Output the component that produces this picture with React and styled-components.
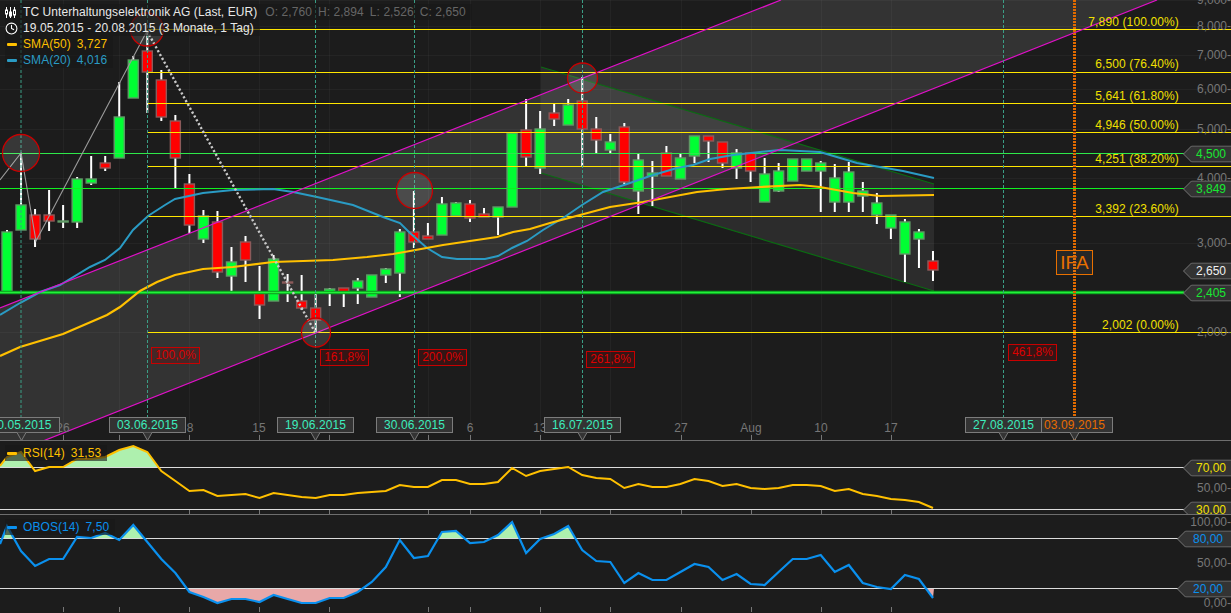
import { Clock } from "lucide-react";
import styled, { createGlobalStyle } from "styled-components";

const GlobalStyle = createGlobalStyle`
  html, body {
    margin: 0;
    padding: 0;
    background: #1c1c1c;
    overflow: hidden;
  }
`;

const Page = styled.div`
  width: 1231px;
  height: 613px;
  display: grid;
  grid-template-rows: 441px 74px 98px;
  background: #1c1c1c;
  font-family: "Liberation Sans", Arial, sans-serif;
  font-size: 12px;
  line-height: 16px;
  overflow: hidden;
`;

const Pane = styled.section`
  position: relative;
  overflow: hidden;
  box-sizing: border-box;
  border-bottom: ${(p) => (p.$last ? "none" : "1px solid #6e6e6e")};
`;

const ChartSvg = styled.svg`
  position: absolute;
  inset: 0;
  display: block;
`;

const Legend = styled.div`
  position: absolute;
  top: ${(p) => p.$top}px;
  left: 5px;
  display: flex;
  flex-direction: column;
  align-items: flex-start;
`;

const LegendRow = styled.div`
  display: flex;
  align-items: center;
  gap: 6px;
  height: 16px;
  padding-right: 6px;
  background: rgba(24, 24, 24, 0.62);
  color: ${(p) => p.$color};
  letter-spacing: 0.07px;
  white-space: nowrap;
`;

const LegendIcon = styled.span`
  width: 18px;
  margin-right: -6px;
  display: flex;
  align-items: center;
  color: #fff;
`;

const Dash = styled.i`
  display: block;
  width: 10px;
  height: 3px;
  margin-left: 2px;
  border-radius: 1px;
  background: ${(p) => p.$color};
`;

const Ohlc = styled.span`
  color: #666;
  margin-left: ${(p) => (p.$first ? "2px" : "0")};
`;

const AxisLabel = styled.span`
  position: absolute;
  right: 0;
  top: ${(p) => p.$y}px;
  transform: translateY(-50%);
  color: #787878;
  white-space: nowrap;
`;

const FibLabel = styled.span`
  position: absolute;
  right: 52px;
  top: ${(p) => p.$y}px;
  transform: translateY(-50%);
  color: #f2e000;
  letter-spacing: 0.13px;
  white-space: nowrap;
`;

const TagBox = styled.div`
  position: absolute;
  right: 0;
  top: ${(p) => p.$y}px;
  width: ${(p) => p.$w}px;
  height: 17px;
  transform: translateY(-50%);
  color: ${(p) => p.$color};

  svg {
    position: absolute;
    inset: 0;
  }

  span {
    position: absolute;
    right: ${(p) => p.$pad}px;
    top: 0;
    line-height: 17px;
  }
`;

const PercentBadge = styled.span`
  position: absolute;
  left: ${(p) => p.$x}px;
  top: ${(p) => p.$y}px;
  box-sizing: border-box;
  width: 49px;
  height: 17px;
  border: 1px solid #c80000;
  background: rgba(140, 0, 0, 0.22);
  color: #dc0000;
  text-align: center;
  line-height: 14px;
`;

const IfaBadge = styled.span`
  position: absolute;
  left: 1056px;
  top: 250px;
  box-sizing: border-box;
  width: 37px;
  height: 25px;
  border: 1px solid #e87000;
  background: rgba(255, 255, 255, 0.05);
  color: #e87000;
  font-size: 19px;
  line-height: 23px;
  text-align: center;
`;

const TickLabel = styled.span`
  position: absolute;
  left: ${(p) => p.$x}px;
  top: 420px;
  transform: translateX(-50%);
  color: #767676;
`;

const DateFlag = styled.div`
  position: absolute;
  left: ${(p) => p.$x - 38.5}px;
  top: 417px;
  box-sizing: border-box;
  width: 77px;
  height: 16px;
  border: 1px solid #7c7c7c;
  background: #333;
  color: ${(p) => p.$color};
  letter-spacing: 0.1px;
  text-align: center;
  line-height: 14px;

  svg {
    position: absolute;
    left: 33px;
    top: 14px;
  }
`;

const STEP = 14.03;
const cx = (i) => 7 + STEP * i;

// [up, bodyTop, bodyBottom, wickTop, wickBottom]
const CANDLES = [
  [1, 232, 292, 230, 292],
  [1, 205, 230, 153, 230],
  [0, 215, 239, 209, 247],
  [0, 215, 221, 190, 231],
  [2, 221, 222, 205, 228],
  [1, 179, 222, 177, 228],
  [1, 179, 183, 156, 185],
  [0, 163, 168, 156, 171],
  [1, 117, 158, 82, 158],
  [1, 60, 98, 56, 98],
  [0, 51, 72, 30, 113],
  [0, 80, 117, 70, 121],
  [0, 121, 158, 115, 188],
  [0, 184, 225, 174, 233],
  [1, 216, 239, 210, 243],
  [0, 222, 272, 211, 278],
  [1, 262, 276, 247, 292],
  [0, 242, 260, 236, 282],
  [0, 293, 305, 266, 319],
  [1, 259, 301, 255, 301],
  [0, 282, 283, 274, 302],
  [0, 301, 308, 275, 310],
  [0, 308, 320, 293, 332],
  [1, 289, 292, 288, 306],
  [0, 288, 292, 288, 307],
  [1, 281, 288, 278, 304],
  [1, 275, 297, 275, 297],
  [1, 269, 275, 268, 283],
  [1, 232, 273, 229, 297],
  [0, 232, 242, 191, 248],
  [0, 236, 239, 223, 239],
  [1, 204, 235, 197, 235],
  [1, 203, 216, 202, 217],
  [0, 204, 218, 200, 222],
  [0, 214, 217, 208, 217],
  [1, 207, 217, 207, 235],
  [1, 133, 207, 133, 207],
  [0, 130, 157, 99, 166],
  [1, 129, 168, 111, 174],
  [0, 113, 119, 103, 126],
  [1, 105, 125, 99, 125],
  [0, 101, 129, 77, 166],
  [0, 129, 140, 117, 153],
  [1, 142, 150, 134, 153],
  [0, 127, 182, 123, 184],
  [1, 160, 191, 154, 214],
  [1, 173, 176, 161, 206],
  [0, 153, 176, 146, 176],
  [1, 158, 179, 154, 179],
  [1, 136, 156, 136, 163],
  [0, 136, 141, 136, 162],
  [0, 142, 163, 142, 168],
  [1, 153, 168, 149, 179],
  [0, 153, 171, 153, 182],
  [1, 174, 202, 158, 202],
  [1, 171, 191, 163, 192],
  [1, 159, 181, 159, 181],
  [1, 159, 171, 159, 171],
  [1, 163, 171, 161, 212],
  [1, 178, 202, 164, 212],
  [1, 172, 202, 162, 212],
  [1, 191, 196, 182, 212],
  [1, 203, 215, 193, 224],
  [1, 215, 228, 215, 239],
  [1, 222, 254, 219, 282],
  [1, 232, 239, 229, 268],
  [0, 261, 270, 251, 281],
];

const SMA20 = "0,315 20,303 40,292 60,285 90,267 105,260 120,248 133,230 148,216 165,205 175,199 203,193 233,190 273,189 293,192 317,197 353,205 383,217 400,223 410,233 427,248 442,257 457,259 485,259 498,256 512,248 527,241 543,230 563,218 582,205 603,192 630,183 650,176 677,168 693,165 710,159 733,155 760,152 780,150 820,152 857,163 903,171 934,178";
const SMA50 = "0,356 20,347 63,334 107,315 120,307 140,291 157,282 175,275 203,269 233,267 273,262 333,260 367,257 393,254 410,251 443,245 497,237 513,232 530,229 550,223 610,207 643,202 697,192 727,189 760,187 800,185 820,187 853,193 880,196 934,195";

// indicator readings as screen y, one per candle, the first one starts at the left edge
const RSI_Y = [458, 453, 472, 468, 468, 460, 460, 458, 451, 447, 453, 472, 482, 492, 491, 497, 496, 495, 499, 494, 496, 498, 499, 496, 496, 494, 493, 492, 486, 488, 488, 481, 481, 485, 485, 483, 469, 477, 472, 470, 468, 476, 479, 480, 489, 485, 488, 488, 485, 480, 482, 487, 485, 489, 490, 489, 486, 486, 487, 492, 490, 495, 497, 500, 501, 503, 509];
const OBOS_Y = [527, 552, 567, 560, 560, 538, 539, 534, 541, 526, 543, 560, 574, 593, 598, 604, 600, 600, 603, 596, 600, 604, 604, 599, 599, 593, 583, 568, 541, 559, 557, 533, 532, 544, 543, 536, 523, 554, 540, 535, 527, 551, 562, 563, 584, 574, 581, 581, 573, 565, 568, 581, 575, 585, 586, 573, 560, 560, 556, 573, 566, 584, 588, 590, 576, 580, 599];

const toPoints = (ys, startY) =>
  [`0,${startY}`, ...ys.map((y, i) => `${cx(i).toFixed(1)},${y}`)].join(" ");

const GRID_X = [63, 119, 189, 259, 329, 428, 470, 540, 610, 681, 751, 821, 891];
const GRID_Y = [0, 26, 55, 89, 129, 178, 243, 332];
const AXIS = [
  ["9,000", 0],
  ["8,000", 26],
  ["7,000", 55],
  ["6,000", 89],
  ["5,000", 129],
  ["4,000", 178],
  ["3,000", 243],
  ["2,000", 332],
];
const FIBS = [
  ["7,890 (100.00%)", 22, 29.5],
  ["6,500 (76.40%)", 64, 72.5],
  ["5,641 (61.80%)", 96, 103.5],
  ["4,946 (50.00%)", 125, 132.5],
  ["4,251 (38.20%)", 159, 166.5],
  ["3,392 (23.60%)", 209, 216.5],
  ["2,002 (0.00%)", 325, 332.5],
];
const CIRCLES = [
  [21, 153, 18.5],
  [147, 29.5, 16.5],
  [316, 332.5, 14.5],
  [414.5, 190.5, 18],
  [582.5, 78, 15],
];
const TICKS = [
  ["26", 63],
  ["8", 190],
  ["15", 259],
  ["6", 470],
  ["13", 540],
  ["27", 681],
  ["Aug", 751],
  ["10", 821],
  ["17", 891],
];
const BADGES = [
  ["100,0%", 151, 347],
  ["161,8%", 320, 349],
  ["200,0%", 418, 349],
  ["261,8%", 586, 351],
  ["461,8%", 1008, 344],
];
const TEAL = "#3dedbd";
const DATES = [
  ["03.09.2015", 1074.5, "#e86c00"],
  ["20.05.2015", 21, TEAL],
  ["03.06.2015", 147.5, TEAL],
  ["19.06.2015", 315.5, TEAL],
  ["30.06.2015", 414.5, TEAL],
  ["16.07.2015", 582.5, TEAL],
  ["27.08.2015", 1003.5, TEAL],
];

const CandleIcon = () => (
  <svg width="12" height="11" viewBox="0 0 12 11">
    <g stroke="#fff" strokeWidth="1" fill="#fff">
      <path d="M1.5 0v11M5.5 0v11M9.5 0v11" />
      <rect x="0.5" y="3" width="2" height="4" fill="#1c1c1c" />
      <rect x="4.5" y="5" width="2" height="4" />
      <rect x="8.5" y="3" width="2" height="5" fill="#1c1c1c" />
    </g>
  </svg>
);

const PriceTag = ({ y, text, color, wide }) => {
  const w = wide ? 54 : 48;
  return (
    <TagBox $y={y} $w={w} $color={color} $pad={wide ? 8 : 5}>
      <svg width={w} height="17">
        <path
          d={`M${w + 2} 0.5H8.5L0.5 8.5L8.5 16.5H${w + 2}Z`}
          fill="#333"
          stroke="#777"
        />
      </svg>
      <span>{text}</span>
    </TagBox>
  );
};

const Candles = () =>
  CANDLES.map(([up, top, bottom, wickTop, wickBottom], i) => {
    const x = cx(i);
    const fill = up === 1 ? "#00ff33" : up === 0 ? "#ff0000" : "#6a8a6a";
    const edge = up === 0 ? "#8c5a5a" : "#5f9a66";
    return (
      <g key={i}>
        <rect x={x - 1} y={wickTop} width="2" height={wickBottom - wickTop} fill="#fff" />
        <rect
          x={x - 5}
          y={top}
          width="10"
          height={bottom - top}
          fill={fill}
          stroke={edge}
          strokeWidth="1.4"
        />
      </g>
    );
  });

const PriceDrawing = () => (
  <ChartSvg width="1231" height="441" viewBox="0 0 1231 441">
    <polygon points="0,308 781,0 1157,0 43,441 0,441" fill="rgba(255,255,255,0.1)" />
    <polygon points="541,67 934,184 934,291 541,173" fill="rgba(255,255,255,0.07)" />
    {GRID_X.map((x) => (
      <line key={x} x1={x + 0.5} x2={x + 0.5} y1="0" y2="441" stroke="rgba(255,255,255,0.035)" />
    ))}
    {GRID_Y.map((y) => (
      <line key={y} x1="0" x2="1231" y1={y + 0.5} y2={y + 0.5} stroke="rgba(255,255,255,0.035)" />
    ))}
    <line x1="541" y1="67" x2="934" y2="184" stroke="#0b6b12" strokeWidth="1.2" />
    <line x1="541" y1="173" x2="934" y2="291" stroke="#0b6b12" strokeWidth="1.2" />
    <Candles />
    {FIBS.map(([label, , y]) => (
      <line key={label} x1="148" x2="1231" y1={y} y2={y} stroke="#ffe600" />
    ))}
    <line x1="0" x2="1184" y1="153.5" y2="153.5" stroke="#2ee84a" />
    <line x1="0" x2="1184" y1="188.5" y2="188.5" stroke="#10f020" />
    <line x1="0" x2="1184" y1="292.5" y2="292.5" stroke="#0a9a1c" strokeWidth="3.4" />
    <line x1="0" x2="1184" y1="292.5" y2="292.5" stroke="#22f03a" strokeWidth="1.4" />
    <polyline points={SMA20} fill="none" stroke="#2a9bc4" strokeWidth="2" />
    <polyline points={SMA50} fill="none" stroke="#ffc000" strokeWidth="2.2" />
    <line x1="0" y1="308" x2="781" y2="0" stroke="#e010c8" strokeWidth="1.2" />
    <line x1="43" y1="441" x2="1157" y2="0" stroke="#e010c8" strokeWidth="1.2" />
    {[21, 147.5, 315.5, 414.5, 582.5, 1003.5].map((x) => (
      <line key={x} x1={x} x2={x} y1="0" y2="441" stroke="#3a9f86" strokeDasharray="3 2" />
    ))}
    <line x1="1074.5" x2="1074.5" y1="0" y2="441" stroke="#e06a00" strokeWidth="3" strokeDasharray="2 1" />
    <polyline points="0,180 21,153 36,241 147,31" fill="none" stroke="#9a9a9a" strokeWidth="1.1" />
    <line x1="147" y1="31" x2="315" y2="332" stroke="#c8c8c8" strokeWidth="2.4" strokeDasharray="2.2 2.2" />
    {CIRCLES.map(([x, y, r]) => (
      <circle key={x} cx={x} cy={y} r={r} fill="rgba(255,255,255,0.12)" stroke="#c80000" strokeWidth="1.3" />
    ))}
    {GRID_X.map((x) => (
      <line key={x} x1={x + 0.5} x2={x + 0.5} y1="435" y2="441" stroke="#777" />
    ))}
  </ChartSvg>
);

const RsiDrawing = () => {
  const line = toPoints(RSI_Y, 467);
  return (
    <ChartSvg width="1231" height="73" viewBox="0 442 1231 73">
      <defs>
        <clipPath id="rsi-high">
          <rect x="0" y="442" width="1231" height="26.5" />
        </clipPath>
      </defs>
      <polygon points={`${line} 934,468.5 0,468.5`} fill="#aef0ae" clipPath="url(#rsi-high)" />
      <line x1="0" x2="1184" y1="468.5" y2="468.5" stroke="#dcdcdc" />
      <line x1="0" x2="1184" y1="510.5" y2="510.5" stroke="#dcdcdc" />
      {GRID_X.slice(2).map((x) => (
        <line key={x} x1={x + 0.5} x2={x + 0.5} y1="511" y2="515" stroke="#777" />
      ))}
      <polyline points={line} fill="none" stroke="#ffc000" strokeWidth="2" />
    </ChartSvg>
  );
};

const ObosDrawing = () => {
  const line = toPoints(OBOS_Y, 545);
  return (
    <ChartSvg width="1231" height="97" viewBox="0 516 1231 97">
      <defs>
        <clipPath id="obos-high">
          <rect x="0" y="516" width="1231" height="23.5" />
        </clipPath>
        <clipPath id="obos-low">
          <rect x="0" y="589.5" width="1231" height="24" />
        </clipPath>
      </defs>
      <polygon points={`${line} 934,539.5 0,539.5`} fill="#aef0ae" clipPath="url(#obos-high)" />
      <polygon points={`${line} 934,589.5 0,589.5`} fill="#e8a8a8" clipPath="url(#obos-low)" />
      <line x1="0" x2="1178" y1="539.5" y2="539.5" stroke="#dcdcdc" />
      <line x1="0" x2="1178" y1="589.5" y2="589.5" stroke="#dcdcdc" />
      {GRID_X.map((x) => (
        <line key={x} x1={x + 0.5} x2={x + 0.5} y1="608" y2="613" stroke="#777" />
      ))}
      <polyline points={line} fill="none" stroke="#0a90ee" strokeWidth="2.2" />
    </ChartSvg>
  );
};

export default function App() {
  return (
    <>
      <GlobalStyle />
      <Page>
        <Pane>
          <PriceDrawing />
          <Legend $top={4}>
            <LegendRow $color="#e8e8e8">
              <LegendIcon>
                <CandleIcon />
              </LegendIcon>
              <span>TC Unterhaltungselektronik AG (Last, EUR)</span>
              <Ohlc $first>O: 2,760</Ohlc>
              <Ohlc>H: 2,894</Ohlc>
              <Ohlc>L: 2,526</Ohlc>
              <Ohlc>C: 2,650</Ohlc>
            </LegendRow>
            <LegendRow $color="#e8e8e8">
              <LegendIcon>
                <Clock size={13} strokeWidth={2} />
              </LegendIcon>
              <span>19.05.2015 - 20.08.2015 (3 Monate, 1 Tag)</span>
            </LegendRow>
            <LegendRow $color="#ffc000">
              <LegendIcon>
                <Dash $color="#ffc000" />
              </LegendIcon>
              <span>SMA(50)</span>
              <span>3,727</span>
            </LegendRow>
            <LegendRow $color="#2a9bc4">
              <LegendIcon>
                <Dash $color="#2a9bc4" />
              </LegendIcon>
              <span>SMA(20)</span>
              <span>4,016</span>
            </LegendRow>
          </Legend>
          {AXIS.map(([text, y]) => (
            <AxisLabel key={text} $y={y}>
              {text}-
            </AxisLabel>
          ))}
          {FIBS.map(([text, y]) => (
            <FibLabel key={text} $y={y}>
              {text}
            </FibLabel>
          ))}
          <PriceTag y={153.5} text="4,500" color="#18e832" />
          <PriceTag y={188.5} text="3,849" color="#18e832" />
          <PriceTag y={270.5} text="2,650" color="#f0f0f0" />
          <PriceTag y={292.5} text="2,405" color="#18e832" />
          {BADGES.map(([text, x, y]) => (
            <PercentBadge key={text} $x={x} $y={y}>
              {text}
            </PercentBadge>
          ))}
          <IfaBadge>IFA</IfaBadge>
          {TICKS.map(([text, x]) => (
            <TickLabel key={text} $x={x}>
              {text}
            </TickLabel>
          ))}
          {DATES.map(([text, x, color]) => (
            <DateFlag key={text} $x={x} $color={color}>
              {text}
              <svg width="9" height="9" viewBox="0 0 9 9">
                <path d="M0 0.5L4.5 8.5L9 0.5" fill="#333" stroke="#7c7c7c" />
              </svg>
            </DateFlag>
          ))}
        </Pane>
        <Pane>
          <RsiDrawing />
          <Legend $top={4}>
            <LegendRow $color="#ffc000">
              <LegendIcon>
                <Dash $color="#ffc000" />
              </LegendIcon>
              <span>RSI(14)</span>
              <span>31,53</span>
            </LegendRow>
          </Legend>
          <AxisLabel $y={47}>50,00-</AxisLabel>
          <PriceTag y={26.5} text="70,00" color="#f2e000" />
          <PriceTag y={68.5} text="30,00" color="#f2e000" />
        </Pane>
        <Pane $last>
          <ObosDrawing />
          <Legend $top={4}>
            <LegendRow $color="#0a90ee">
              <LegendIcon>
                <Dash $color="#0a90ee" />
              </LegendIcon>
              <span>OBOS(14)</span>
              <span>7,50</span>
            </LegendRow>
          </Legend>
          <AxisLabel $y={7}>100,00-</AxisLabel>
          <AxisLabel $y={48}>50,00-</AxisLabel>
          <AxisLabel $y={88}>0,00-</AxisLabel>
          <PriceTag y={23.5} text="80,00" color="#0a90ee" wide />
          <PriceTag y={73.5} text="20,00" color="#0a90ee" wide />
        </Pane>
      </Page>
    </>
  );
}
